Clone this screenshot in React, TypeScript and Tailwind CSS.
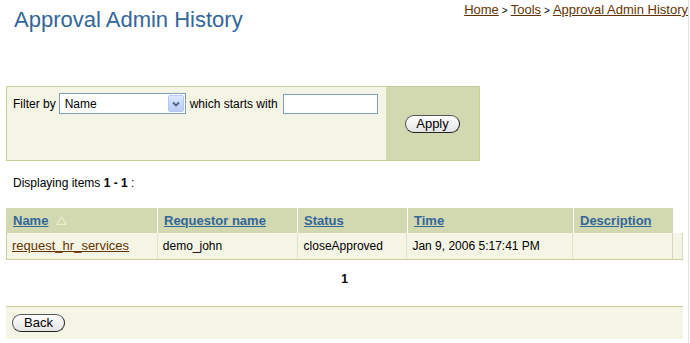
export default function App() {
  const cols = [
    { label: "Name", w: "w-[152px]", hpl: "pl-[7px]" },
    { label: "Requestor name", w: "w-[140px]", hpl: "pl-[6px]" },
    { label: "Status", w: "w-[110px]", hpl: "pl-[6px]" },
    { label: "Time", w: "w-[166px]", hpl: "pl-[6px]" },
    { label: "Description", w: "w-[99px]", hpl: "pl-[6px]" },
  ];

  return (
    <div
      className="w-[689px] h-[343px] bg-white border-r border-[#e2e2e2] flex flex-col text-[12px] text-black"
      style={{ fontFamily: '"Liberation Sans", Arial, sans-serif' }}
    >
      {/* header */}
      <div className="flex justify-between items-start">
        <h1 className="ml-[14px] mt-[9px] text-[22px] leading-[22px] text-[#336699] font-normal">
          Approval Admin History
        </h1>
        <div className="mt-[2px] flex items-baseline text-[13px] leading-[15px] text-[#663300]">
          <a className="underline">Home</a>
          <span className="mx-[3px] text-[10px] text-black">&gt;</span>
          <a className="underline">Tools</a>
          <span className="mx-[3px] text-[10px] text-black">&gt;</span>
          <a className="underline">Approval Admin History</a>
        </div>
      </div>

      {/* filter box */}
      <div className="mt-[55px] ml-[6px] w-[474px] h-[75px] border border-[#cccc99] flex">
        <div className="flex-1 bg-[#f5f5e6] pt-[6px] pl-[6px]">
          <div className="flex items-center">
            <span>Filter by</span>
            <div className="ml-[3px] w-[127px] h-[21px] border border-[#7f9db9] bg-white flex items-center justify-between pl-[5px] pr-px">
              <span>Name</span>
              <div className="w-[16px] h-[17px] rounded-[2px] border border-[#b5c8f2] bg-gradient-to-b from-[#dde8fe] to-[#b7cbf9] flex items-center justify-center">
                <svg width="8" height="6" viewBox="0 0 8 6">
                  <path d="M1 1.5 L4 4.5 L7 1.5" fill="none" stroke="#4d6185" strokeWidth="1.8" />
                </svg>
              </div>
            </div>
            <span className="ml-[4px]">which starts with</span>
            <div className="ml-[5px] w-[95px] h-[20px] border border-[#7f9db9] bg-white"></div>
          </div>
        </div>
        <div className="w-[93px] bg-[#d2d8b0] flex items-center justify-center">
          <button className="w-[55px] h-[18px] rounded-full border border-[#555] border-r-[#222] border-b-[#222] bg-gradient-to-b from-white to-[#e4e4e4] text-[13px] leading-[14px] flex items-center justify-center">
            Apply
          </button>
        </div>
      </div>

      <div className="ml-[13px] mt-[15px] leading-[14px]">
        Displaying items <b>1 - 1</b> :
      </div>

      {/* table */}
      <div className="ml-[6px] mt-[18px] w-[677px]">
        <div className="flex h-[25px]">
          {cols.map((c, i) => (
            <div
              key={c.label}
              className={`${c.w} ${c.hpl} bg-[#d2d8b0] flex items-center gap-[8px] ${i < 4 ? "border-r border-white" : ""}`}
            >
              <a className="underline font-bold text-[13px] text-[#336699]">{c.label}</a>
              {i === 0 && (
                <svg width="11" height="9" viewBox="0 0 11 9">
                  <path d="M5.5 0.8 L10.2 8.3 L0.8 8.3 Z" fill="none" stroke="#f4f4d8" strokeWidth="1" />
                </svg>
              )}
            </div>
          ))}
        </div>
        <div className="flex h-[27px] border-l border-b border-[#cccc99] bg-[#f5f5e6]">
          <div className="w-[151px] pl-[5px] border-r border-[#dfe2c9] flex items-center">
            <a className="underline text-[13px] text-[#663300]">request_hr_services</a>
          </div>
          <div className="w-[140px] pl-[5px] border-r border-[#dfe2c9] flex items-center">demo_john</div>
          <div className="w-[110px] pl-[6px] border-r border-[#dfe2c9] flex items-center">closeApproved</div>
          <div className="w-[166px] pl-[5px] border-r border-[#dfe2c9] flex items-center">Jan 9, 2006 5:17:41 PM</div>
          <div className="w-[100px] border-r border-[#d6d9bb]"></div>
          <div className="w-[10px] border-r border-[#d6d9bb]"></div>
        </div>
      </div>

      <div className="ml-[6px] w-[677px] mt-[12px] text-center font-bold leading-[14px]">1</div>

      {/* footer */}
      <div className="ml-[6px] mt-[20px] w-[677px] h-[33px] border-t border-[#cccc99] bg-[#f5f5e6] pl-[6px] pt-[7px]">
        <button className="w-[53px] h-[18px] rounded-full border border-[#555] border-r-[#222] border-b-[#222] bg-gradient-to-b from-white to-[#e4e4e4] text-[13px] leading-[14px] flex items-center justify-center">
          Back
        </button>
      </div>
    </div>
  );
}
